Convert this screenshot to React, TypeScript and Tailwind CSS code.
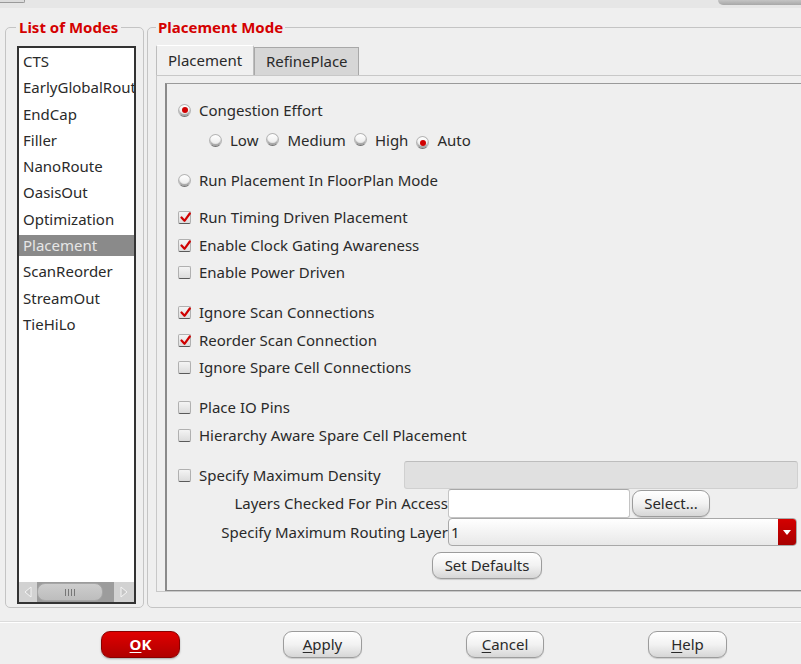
import React from "react";

const Radio = ({ checked = false }: { checked?: boolean }) => (
  <span className="inline-flex h-[13px] w-[13px] shrink-0 items-center justify-center rounded-full border border-[#b4b4b4] border-b-[#707070] bg-linear-to-b from-white to-[#e8e8e8] shadow-[inset_0_-2px_1px_rgba(0,0,0,0.3)]">
    {checked && <span className="h-[6px] w-[6px] rounded-full bg-[#d00000]" />}
  </span>
);

const Check = ({ checked = false }: { checked?: boolean }) => (
  <span className="relative inline-flex h-[13px] w-[13px] shrink-0 items-center justify-center rounded-[2px] border border-[#b0b0b0] border-b-[#5a5a5a] bg-linear-to-b from-[#f4f4f4] to-[#dcdcdc]">
    {checked && (
      <svg width="11" height="11" viewBox="0 0 11 11" className="absolute left-[1px] top-[0px]">
        <path d="M1.5 5.5 L4.5 8.8 L9.8 1.5" fill="none" stroke="#d00000" strokeWidth="2.2" strokeLinecap="round" strokeLinejoin="round" />
      </svg>
    )}
  </span>
);

const Btn = ({ children, className = "" }: { children: React.ReactNode; className?: string }) => (
  <div
    className={
      "flex items-center justify-center rounded-[9px] border border-[#9c9c9c] bg-linear-to-b from-white via-[#f2f2f2] to-[#d6d6d6] text-[15px] text-[#2a2a2a] shadow-[0_1px_1px_rgba(0,0,0,0.15)] " +
      className
    }
  >
    {children}
  </div>
);

const modes = [
  "CTS",
  "EarlyGlobalRoute",
  "EndCap",
  "Filler",
  "NanoRoute",
  "OasisOut",
  "Optimization",
  "Placement",
  "ScanReorder",
  "StreamOut",
  "TieHiLo",
];

export default function App() {
  return (
    <div className="relative h-[664px] w-[801px] overflow-hidden bg-[#efefef] font-['Noto_Sans',sans-serif] text-[15px] text-[#2a2a2a]">
      {/* title bar remnant */}
      <div className="flex h-[8px] items-start justify-between bg-[#e6e6e6]">
        <div className="h-[3px] w-[25px] rounded-br-[2px] border-b border-r border-[#9a9a9a] bg-[#dcdcdc]" />
        <div className="h-[5px] w-[83px] rounded-bl-[6px] bg-linear-to-b from-[#c4c4c4] to-[#a8a8a8]" />
      </div>

      {/* main */}
      <div className="flex h-[602px] gap-[3px] pl-[5px] pt-[9px]">
        {/* left group */}
        <fieldset className="flex h-[591px] w-[139px] min-w-0 shrink-0 flex-col rounded-[5px] border border-[#c4c4c4] pb-[3px] pl-[11px] pr-[7px] pt-[9px]">
          <legend className="-ml-[1px] px-[3px] text-[15px] font-bold leading-[20px] text-[#d40000]">List of Modes</legend>
          <div className="flex min-w-0 flex-1 flex-col overflow-hidden border-2 border-[#333] bg-white">
            <div className="flex-1 overflow-hidden pt-[3px]">
              {modes.map((m) => (
                <div
                  key={m}
                  className={
                    "mb-[5.3px] flex h-[21px] items-center overflow-hidden whitespace-nowrap pl-[4px] leading-[21px] " +
                    (m === "Placement" ? "bg-[#8a8a8a] text-[#e6e6e6]" : "text-[#2a2a2a]")
                  }
                >
                  {m}
                </div>
              ))}
            </div>
            {/* scrollbar */}
            <div className="flex h-[20px] items-stretch bg-[#cfcfcf]">
              <div className="flex w-[18px] items-center justify-center bg-[#d2d2d2]">
                <svg width="10" height="12" viewBox="0 0 10 12">
                  <path d="M8 1 L2 6 L8 11 Z" fill="#c6c6c6" stroke="#f4f4f4" strokeWidth="1" />
                </svg>
              </div>
              <div className="flex flex-1 items-center bg-[#9c9c9c]">
                <div className="flex h-[18px] w-[66px] items-center justify-center rounded-[8px] border border-[#a6a6a6] bg-linear-to-b from-[#cdcdcd] to-[#bdbdbd]">
                  <div className="flex gap-[2px]">
                    <span className="h-[7px] w-px bg-[#777]" />
                    <span className="h-[7px] w-px bg-[#777]" />
                    <span className="h-[7px] w-px bg-[#777]" />
                    <span className="h-[7px] w-px bg-[#777]" />
                  </div>
                </div>
              </div>
              <div className="flex w-[20px] items-center justify-center bg-[#d2d2d2]">
                <svg width="10" height="12" viewBox="0 0 10 12">
                  <path d="M2 1 L8 6 L2 11 Z" fill="#c6c6c6" stroke="#f4f4f4" strokeWidth="1" />
                </svg>
              </div>
            </div>
          </div>
        </fieldset>

        {/* right group */}
        <fieldset className="flex h-[591px] w-[680px] min-w-0 shrink-0 flex-col rounded-[5px] border border-[#c4c4c4] pb-[15px] pl-[8px] pt-[9px]">
          <legend className="px-[2px] text-[15px] font-bold leading-[20px] text-[#d40000]">Placement Mode</legend>
          {/* tabs */}
          <div className="flex h-[29px] items-end">
            <div className="flex h-[30px] w-[98px] items-center rounded-t-[2px] border border-b-0 border-[#bdbdbd] border-t-white bg-[#f0f0f0] pl-[11px]">
              Placement
            </div>
            <div className="flex h-[28px] w-[105px] items-center border border-b-0 border-[#a8a8a8] bg-[#d6d6d6] pl-[11px]">
              RefinePlace
            </div>
          </div>
          <div className="flex flex-1 flex-col border border-[#c8c8c8] pl-[8px] pt-[7px]">
            <div className="flex flex-1 flex-col border-l-2 border-t border-b border-[#8a8a8a] border-t-[#9a9a9a] pl-[11px] pt-[13px]">
              <div className="flex h-[26px] items-center gap-[8px]">
                <Radio checked />
                <span>Congestion Effort</span>
              </div>
              <div className="mt-[4px] flex h-[26px] items-center pl-[31px]">
                <Radio />
                <span className="ml-[8px]">Low</span>
                <span className="ml-[8px]"><Radio /></span>
                <span className="ml-[8px]">Medium</span>
                <span className="ml-[8px]"><Radio /></span>
                <span className="ml-[8px]">High</span>
                <span className="ml-[8px]"><Radio checked /></span>
                <span className="ml-[8px]">Auto</span>
              </div>
              <div className="mt-[14px] flex h-[26px] items-center gap-[8px]">
                <Radio />
                <span>Run Placement In FloorPlan Mode</span>
              </div>

              <div className="mt-[11px] flex h-[26px] items-center gap-[8px]">
                <Check checked />
                <span>Run Timing Driven Placement</span>
              </div>
              <div className="mt-[2px] flex h-[26px] items-center gap-[8px]">
                <Check checked />
                <span>Enable Clock Gating Awareness</span>
              </div>
              <div className="mt-[1px] flex h-[26px] items-center gap-[8px]">
                <Check />
                <span>Enable Power Driven</span>
              </div>

              <div className="mt-[14px] flex h-[26px] items-center gap-[8px]">
                <Check checked />
                <span>Ignore Scan Connections</span>
              </div>
              <div className="mt-[2px] flex h-[26px] items-center gap-[8px]">
                <Check checked />
                <span>Reorder Scan Connection</span>
              </div>
              <div className="mt-[1px] flex h-[26px] items-center gap-[8px]">
                <Check />
                <span>Ignore Spare Cell Connections</span>
              </div>

              <div className="mt-[14px] flex h-[26px] items-center gap-[8px]">
                <Check />
                <span>Place IO Pins</span>
              </div>
              <div className="mt-[2px] flex h-[26px] items-center gap-[8px]">
                <Check />
                <span>Hierarchy Aware Spare Cell Placement</span>
              </div>

              <div className="mt-[13px] flex h-[28px] items-center">
                <Check />
                <span className="ml-[8px] w-[205px]">Specify Maximum Density</span>
                <div className="h-[28px] w-[394px] rounded-[3px] border border-[#d0d0d0] border-t-[#bdbdbd] bg-[#e0e0e0]" />
              </div>

              <div className="-ml-[11px] flex h-[29px] items-center">
                <span className="w-[281px] text-right">Layers Checked For Pin Access</span>
                <div className="h-[29px] w-[182px] rounded-[3px] border border-[#c4c4c4] border-t-[#a8a8a8] bg-white" />
                <Btn className="ml-[2px] h-[27px] w-[78px]">Select...</Btn>
              </div>

              <div className="-ml-[11px] flex h-[28px] items-center">
                <span className="w-[281px] text-right">Specify Maximum Routing Layer</span>
                <div className="flex h-[28px] w-[349px] items-center overflow-hidden rounded-[4px] border border-[#a8a8a8] bg-linear-to-b from-white to-[#e8e8e8]">
                  <span className="flex-1 pl-[2px]">1</span>
                  <div className="flex h-full w-[18px] items-center justify-center bg-linear-to-b from-[#d40000] to-[#a80000]">
                    <svg width="8" height="5" viewBox="0 0 8 5">
                      <path d="M0 0 L8 0 L4 5 Z" fill="#ffffff" />
                    </svg>
                  </div>
                </div>
              </div>

              <div className="mt-[6px] flex pl-[254px]">
                <Btn className="h-[27px] w-[110px]">Set Defaults</Btn>
              </div>
            </div>
          </div>
        </fieldset>
      </div>

      {/* separator */}
      <div className="mt-[11px] h-px bg-[#dcdcdc]" />
      <div className="h-px bg-white" />

      {/* bottom buttons */}
      <div className="flex pl-[101px] pt-[8px]">
        <div className="flex h-[27px] w-[79px] items-center justify-center rounded-[9px] border border-[#8a0000] bg-linear-to-b from-[#e00000] to-[#b00000] text-[15px] font-bold text-white shadow-[0_1px_2px_rgba(0,0,0,0.3)]">
          <span><span className="underline underline-offset-2">O</span>K</span>
        </div>
        <Btn className="ml-[103px] h-[27px] w-[79px]">
          <span><span className="underline underline-offset-2">A</span>pply</span>
        </Btn>
        <Btn className="ml-[104px] h-[27px] w-[78px]">
          <span><span className="underline underline-offset-2">C</span>ancel</span>
        </Btn>
        <Btn className="ml-[104px] h-[27px] w-[79px]">
          <span><span className="underline underline-offset-2">H</span>elp</span>
        </Btn>
      </div>
    </div>
  );
}
